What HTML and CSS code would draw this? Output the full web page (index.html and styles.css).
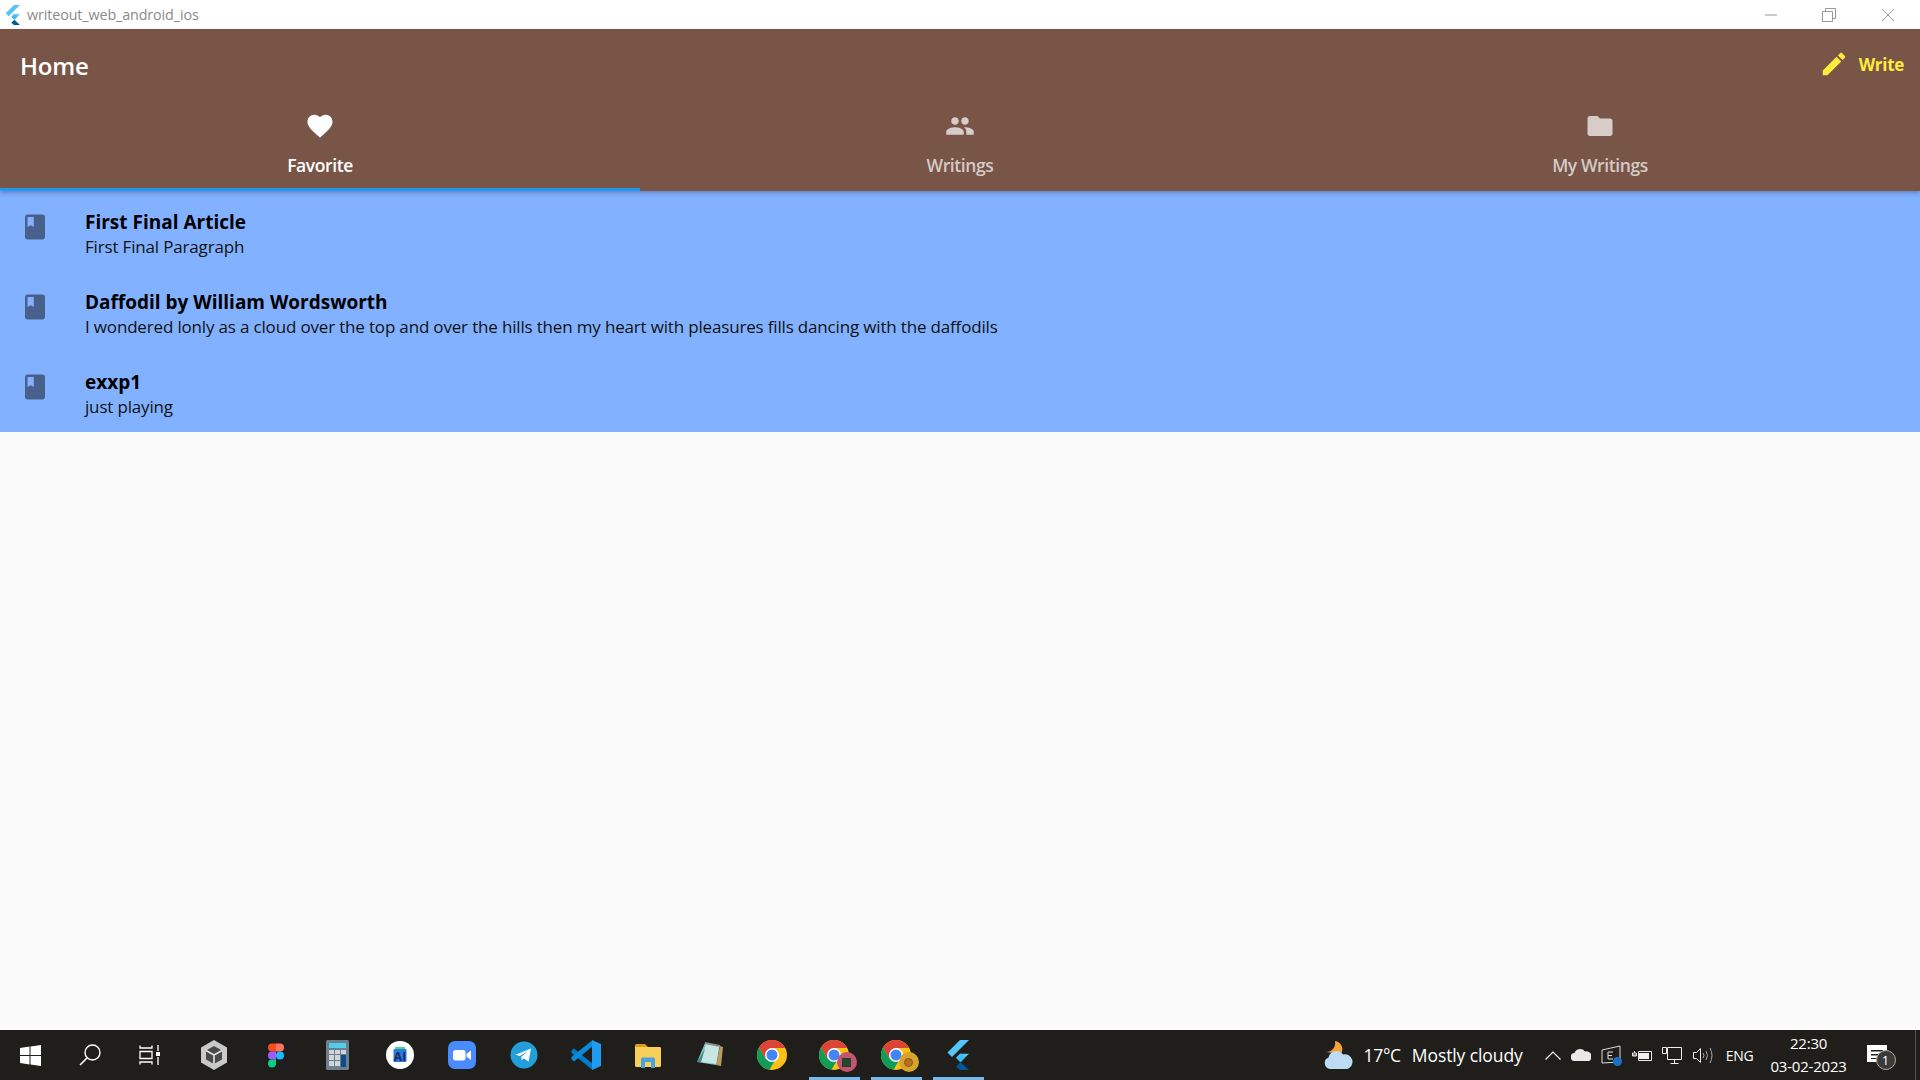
FILE: index.html
```html
<!DOCTYPE html>
<html lang="en">
<head>
    <meta charset="UTF-8">
    <title>writeout_web_android_ios</title>
    <link rel="stylesheet" href="styles.css">
</head>
<body>
    <svg class="defs" width="0" height="0">
        <symbol id="flutter" viewBox="0 0 24 30">
            <path fill="#54c5f8" d="M15 0 H24 L7 17 L2.500 12.500 Z"/>
            <path fill="#54c5f8" d="M15 13.800 H24 L15.500 22.300 L11 17.800 Z"/>
            <path fill="#01579b" d="M11 26.800 L15.500 22.300 L24 30 H15 Z"/>
            <path fill="#29b6f6" d="M11 17.800 L15.500 13.300 L20 17.800 L15.500 22.300 Z" opacity=".6"/>
        </symbol>
        <symbol id="chrome" viewBox="0 0 30 30">
            <circle cx="15" cy="15" r="15" fill="#fbc116"/>
            <path fill="#db4437" d="M15 0 A15 15 0 0 0 2 7.500 L8.500 18.800 L15 8 H28 A15 15 0 0 0 15 0 Z"/>
            <path fill="#0f9d58" d="M2 7.500 A15 15 0 0 0 12.500 29.800 L19 18.800 L8.500 18.800 Z"/>
            <circle cx="15" cy="15" r="7" fill="#fff"/>
            <circle cx="15" cy="15" r="5.500" fill="#4285f4"/>
        </symbol>
        <symbol id="book" viewBox="0 0 24 24">
            <path fill-rule="evenodd" d="M18 2H6c-1.100 0-2 .9-2 2v16c0 1.100.9 2 2 2h12c1.100 0 2-.9 2-2V4c0-1.100-.9-2-2-2zM6 4h5v8l-2.500-1.500L6 12V4z"/>
        </symbol>
    </svg>

    <div class="titlebar">
        <svg class="title-logo"><use href="#flutter"/></svg>
        <span class="title-text">writeout_web_android_ios</span>
        <div class="win-controls">
            <div class="win-btn">
                <svg width="14" height="14" viewBox="0 0 14 14"><path d="M1 7H13" stroke="#999" fill="none"/></svg>
            </div>
            <div class="win-btn">
                <svg width="14" height="14" viewBox="0 0 14 14"><path d="M.5 3.500H10.500V13.500H.5ZM3.500 3.500V.5H13.500V10.500H10.500" stroke="#999" fill="none"/></svg>
            </div>
            <div class="win-btn">
                <svg width="14" height="14" viewBox="0 0 14 14"><path d="M1 1L13 13M13 1L1 13" stroke="#999" fill="none"/></svg>
            </div>
        </div>
    </div>

    <header class="appbar">
        <div class="toolbar">
            <span class="home-title">Home</span>
            <div class="write-btn">
                <svg width="30" height="30" viewBox="0 0 24 24"><path fill="#ffeb3b" d="M3 17.250V21h3.750L17.810 9.940l-3.750-3.750L3 17.250zM20.710 7.040c.39-.39.39-1.020 0-1.410l-2.340-2.340c-.39-.39-1.020-.39-1.410 0l-1.830 1.830 3.750 3.750 1.830-1.830z"/></svg>
                <span class="write-text">Write</span>
            </div>
        </div>
        <nav class="tabs">
            <div class="tab active">
                <svg class="tab-icon" viewBox="0 0 24 24"><path d="M12 21.350l-1.450-1.320C5.400 15.360 2 12.280 2 8.500 2 5.420 4.420 3 7.500 3c1.740 0 3.410.81 4.500 2.090C13.090 3.810 14.760 3 16.500 3 19.580 3 22 5.420 22 8.500c0 3.780-3.400 6.860-8.550 11.540L12 21.350z"/></svg>
                <span class="tab-label">Favorite</span>
            </div>
            <div class="tab">
                <svg class="tab-icon" viewBox="0 0 24 24"><path d="M16 11c1.660 0 2.990-1.340 2.990-3S17.660 5 16 5c-1.660 0-3 1.340-3 3s1.340 3 3 3zm-8 0c1.660 0 2.990-1.340 2.990-3S9.660 5 8 5C6.340 5 5 6.340 5 8s1.340 3 3 3zm0 2c-2.330 0-7 1.170-7 3.500V19h14v-2.500c0-2.330-4.670-3.500-7-3.500zm8 0c-.29 0-.62.020-.97.050 1.160.84 1.970 1.970 1.970 3.450V19h6v-2.500c0-2.330-4.670-3.500-7-3.500z"/></svg>
                <span class="tab-label">Writings</span>
            </div>
            <div class="tab">
                <svg class="tab-icon" viewBox="0 0 24 24"><path d="M10 4H4c-1.100 0-1.990.9-1.990 2L2 18c0 1.100.9 2 2 2h16c1.100 0 2-.9 2-2V8c0-1.100-.9-2-2-2h-8l-2-2z"/></svg>
                <span class="tab-label">My Writings</span>
            </div>
        </nav>
    </header>

    <main class="content">
        <ul class="article-list">
            <li class="article">
                <svg class="article-icon"><use href="#book"/></svg>
                <div>
                    <div class="article-title">First Final Article</div>
                    <div class="article-text">First Final Paragraph</div>
                </div>
            </li>
            <li class="article">
                <svg class="article-icon"><use href="#book"/></svg>
                <div>
                    <div class="article-title">Daffodil by William Wordsworth</div>
                    <div class="article-text">I wondered lonly as a cloud over the top and over the hills then my heart with pleasures fills dancing with the daffodils</div>
                </div>
            </li>
            <li class="article">
                <svg class="article-icon"><use href="#book"/></svg>
                <div>
                    <div class="article-title">exxp1</div>
                    <div class="article-text">just playing</div>
                </div>
            </li>
        </ul>
    </main>

    <footer class="taskbar">
        <div class="sys-btn">
            <svg width="21" height="21" viewBox="0 0 21 21"><path fill="#fff" d="M0 3L9.500 1.600V10H0ZM10.500 1.400L21 0V10H10.500ZM0 11H9.500V19.400L0 18ZM10.500 11H21V21L10.500 19.600Z"/></svg>
        </div>
        <div class="sys-btn">
            <svg width="22" height="22" viewBox="0 0 22 22"><circle cx="13.500" cy="8.500" r="7.500" fill="none" stroke="#fff" stroke-width="1.400"/><path d="M8 14L1 21" stroke="#fff" stroke-width="1.600"/></svg>
        </div>
        <div class="sys-btn">
            <svg width="22" height="20" viewBox="0 0 22 20"><path fill="none" stroke="#fff" stroke-width="1.300" d="M1 .5V3H13V.5M1 6.500H13V13.500H1ZM1 19.500V17H13V19.500M19 0V6M19 12V20"/><rect x="17" y="7" width="4" height="4" fill="#fff"/></svg>
        </div>

        <div class="task-icons">
            <div class="task-item">
                <svg width="28" height="30" viewBox="0 0 28 30"><path fill="#c9c9c9" d="M14 0L27 7.500V22.500L14 30L1 22.500V7.500Z"/><path fill="#4a4a4a" d="M14 6L22 10.500V19.500L14 24L6 19.500V10.500Z"/><path fill="none" stroke="#e4e4e4" stroke-width="1.600" d="M14 15V24M14 15L6 10.500M14 15L22 10.500"/></svg>
            </div>
            <div class="task-item">
                <div class="figma-box">
                    <svg width="16" height="25" viewBox="0 0 16 24"><path fill="#f24e1e" d="M4 0H8V8H4A4 4 0 0 1 4 0Z"/><path fill="#ff7262" d="M8 0H12A4 4 0 0 1 12 8H8Z"/><path fill="#a259ff" d="M4 8H8V16H4A4 4 0 0 1 4 8Z"/><circle cx="12" cy="12" r="4" fill="#1abcfe"/><path fill="#0acf83" d="M4 16H8V20A4 4 0 1 1 4 16Z"/></svg>
                </div>
            </div>
            <div class="task-item">
                <svg width="24" height="30" viewBox="0 0 24 30"><rect width="23" height="30" rx="1.500" fill="#6d7f8c"/><rect x="3" y="3" width="17" height="5" fill="#4dd0e8"/><path fill="#cfd6da" d="M3 10H8V14H3ZM9 10H14V14H9ZM15 10H20V14H15ZM3 15H8V20H3ZM9 15H14V20H9ZM3 21H8V26H3ZM9 21H14V26H9Z"/><rect x="15" y="15" width="5" height="12" fill="#0f4a8a"/></svg>
            </div>
            <div class="task-item">
                <svg width="28" height="28" viewBox="0 0 28 28"><circle cx="14" cy="14" r="14" fill="#fff"/><path fill="#3ddc84" d="M9 6H19V10H9Z"/><rect x="7.500" y="8" width="13" height="13" rx="1" fill="#2f78e0"/><text x="14" y="20" text-anchor="middle" class="ai-text">AI</text></svg>
            </div>
            <div class="task-item">
                <svg width="28" height="28" viewBox="0 0 28 28"><rect width="28" height="28" rx="7" fill="#4a8cff"/><rect x="5" y="9" width="12.500" height="10.500" rx="2.500" fill="#fff"/><path fill="#fff" d="M18.500 13L23 9.500V19L18.500 15.500Z"/></svg>
            </div>
            <div class="task-item">
                <svg width="28" height="28" viewBox="0 0 28 28"><circle cx="14" cy="14" r="13.500" fill="#229ed9"/><path fill="#fff" d="M5.500 13.800L21 7.600 18.600 20.700 13.900 17.300 11.700 19.300 11.300 15.800 18 10 9.900 15.100Z"/></svg>
            </div>
            <div class="task-item">
                <svg width="30" height="30" viewBox="0 0 30 30"><path fill="#007acc" d="M.5 10.500L3 8.500L22 24L21 29.500L.5 13Z"/><path fill="#0b8ad8" d="M.5 19.500L3 21.500L22 6L21 .5L.5 17Z"/><path fill="#1f9cf0" d="M21 0L30 4V26L21 30Z"/></svg>
            </div>
            <div class="task-item">
                <svg width="28" height="25" viewBox="0 0 28 25"><path fill="#d9a012" d="M1 2.500A1.500 1.500 0 0 1 2.500 1H11L14 4H1Z"/><path fill="#f9cf5b" d="M1 4H26A1.500 1.500 0 0 1 27 5.500V22.500A1.500 1.500 0 0 1 25.500 24H2.500A1.500 1.500 0 0 1 1 22.500Z"/><path fill="#4aa3e0" d="M7 25V16A1.500 1.500 0 0 1 8.500 14.500H19.500A1.500 1.500 0 0 1 21 16V25H17V19H11V25Z"/></svg>
            </div>
            <div class="task-item">
                <svg width="28" height="28" viewBox="0 0 28 28"><path fill="#7cc4c0" d="M9 2L24 5L20 24L1 21Z"/><path fill="#c8e6e2" d="M10 3L23 5.500L20.500 23L5 21Z"/><path fill="#2f6f7a" d="M1 21L9 8L5 21Z" opacity=".7"/><path fill="#b89a62" d="M24 5L27 6L25 25L20 24Z"/><path fill="#8b8b8b" d="M9 1L24 4V6L9 3Z"/></svg>
            </div>
            <div class="task-item">
                <svg class="chrome-icon"><use href="#chrome"/></svg>
            </div>
            <div class="task-item running">
                <svg class="chrome-icon"><use href="#chrome"/></svg>
                <div class="profile-badge badge-pink"><span class="badge-core"></span></div>
            </div>
            <div class="task-item running">
                <svg class="chrome-icon"><use href="#chrome"/></svg>
                <div class="profile-badge badge-gold"><span class="badge-core gold"></span></div>
            </div>
            <div class="task-item running flutter-item">
                <svg class="flutter-icon"><use href="#flutter"/></svg>
            </div>
        </div>

        <div class="tray">
            <svg class="tray-weather" width="32" height="30" viewBox="0 0 32 30"><path fill="#f3a43a" d="M13 1A8.500 8.500 0 0 1 19 14L4 12A9 9 0 0 0 13 1Z"/><path fill="#bcdcf6" d="M8 29A6 6 0 0 1 6.500 17.500A8 8 0 0 1 21 14.500A7 7 0 0 1 25 29Z"/></svg>
            <span class="temp">17°C</span>
            <span class="weather">Mostly cloudy</span>
            <svg class="tray-chevron" width="16" height="9" viewBox="0 0 16 9"><path d="M.5 8.500L8 1L15.500 8.500" stroke="#fff" stroke-width="1.200" fill="none"/></svg>
            <svg class="tray-icon" width="20" height="12" viewBox="0 0 20 12"><path fill="#e8e8e8" d="M4 12A4 4 0 0 1 3.500 4A6 6 0 0 1 14 2.500A5 5 0 0 1 20 9.500Q20 12 17 12Z"/></svg>
            <div class="tray-sync">
                <svg width="20" height="20" viewBox="0 0 20 20"><path d="M1 5L19 1V17L1 18Z" stroke="#ddd" fill="none"/><path d="M12 7H7V14H12M7 10.500H11" stroke="#ddd" fill="none"/></svg>
                <span class="sync-dot"></span>
            </div>
            <svg class="tray-icon" width="20" height="14" viewBox="0 0 20 14"><path d="M6.500 3.500H19.500V12.500H6.500Z" stroke="#eee" fill="none"/><path d="M7 5H17V11H7Z" fill="#eee"/><path d="M0 7H4M2.500 3V5M.5 5H4.500V8H.5Z" stroke="#eee" fill="none"/></svg>
            <svg class="tray-icon" width="20" height="18" viewBox="0 0 20 18"><path d="M5.500 1.500H19.500V13.500H5.500ZM12.500 13.500V17M8.500 17.500H16.500M.5 1.500H4.500V7.500H.5Z" stroke="#eee" fill="none"/></svg>
            <svg class="tray-icon" width="20" height="17" viewBox="0 0 20 17"><path d="M.5 5.500H3.500L7.500 1.500V15.500L3.500 11.500H.5Z" stroke="#eee" fill="none"/><path d="M10 6Q12 8.500 10 11M13 4Q16 8.500 13 13M17 1Q21 8.500 17 16" stroke="#aaa" fill="none"/></svg>
            <span class="lang">ENG</span>
            <div class="clock">
                <span>22:30</span>
                <span>03-02-2023</span>
            </div>
            <div class="notify">
                <svg width="20" height="20" viewBox="0 0 20 20"><path fill-rule="evenodd" fill="#fff" d="M0 0H20V17H0ZM4 5V6.500H16V5ZM4 9V10.500H16V9ZM4 13V14H12V13Z"/></svg>
                <span class="notify-count">1</span>
            </div>
            <div class="show-desktop"></div>
        </div>
    </footer>
</body>
</html>
```

FILE: styles.css
```css
* {
    box-sizing: border-box;
}

body {
    margin: 0;
    height: 1080px;
    display: flex;
    flex-direction: column;
    overflow: hidden;
    background-color: #fafafa;
    font-family: "Open Sans", "Noto Sans", sans-serif;
}

.defs {
    display: block;
    height: 0;
}

/* window title bar */
.titlebar {
    height: 29px;
    display: flex;
    align-items: center;
    background-color: #fff;
}

.title-logo {
    width: 16px;
    height: 20px;
    margin-left: 4px;
}

.title-text {
    margin-left: 7px;
    font-size: 14.3px;
    letter-spacing: -0.1px;
    color: #8a8a8a;
}

.win-controls {
    margin-left: auto;
    margin-right: 3px;
    display: flex;
}

.win-btn {
    width: 58.5px;
    display: flex;
    justify-content: center;
}

/* app bar + tabs */
.appbar {
    height: 162px;
    background-color: #795548;
    box-shadow: 0 2px 4px rgba(0, 0, 0, 0.25);
    position: relative;
}

.toolbar {
    height: 70px;
    padding: 0 16px 0 20px;
    display: flex;
    align-items: center;
    justify-content: space-between;
    color: #fff;
}

.home-title {
    font-size: 24px;
    font-weight: 600;
    letter-spacing: -0.2px;
    margin-top: 3px;
}

.write-btn {
    display: flex;
    align-items: center;
    gap: 10px;
}

.write-text {
    font-size: 17px;
    font-weight: 700;
    letter-spacing: -0.3px;
    color: #ffeb3b;
}

.tabs {
    display: flex;
}

.tab {
    flex: 1;
    height: 92px;
    padding-top: 12px;
    display: flex;
    flex-direction: column;
    align-items: center;
    gap: 13px;
    border-bottom: 3px solid transparent;
    color: rgba(255, 255, 255, 0.7);
}

.tab.active {
    color: #fff;
    border-bottom-color: #2196f3;
}

.tab-icon {
    width: 30px;
    height: 30px;
    fill: currentColor;
}

.tab-label {
    font-size: 17.5px;
    font-weight: 600;
    letter-spacing: -0.4px;
    line-height: 23px;
}

/* list */
.content {
    flex: 1;
}

.article-list {
    margin: 0;
    padding: 1px 0 0;
    list-style: none;
    background-color: #82b1ff;
}

.article {
    height: 80px;
    padding: 18px 0 0 20px;
    display: flex;
    gap: 35px;
    color: #000;
}

.article-icon {
    width: 30px;
    height: 30px;
    margin-top: 2px;
    fill: rgba(0, 0, 0, 0.45);
}

.article-title {
    font-size: 19px;
    font-weight: 700;
    line-height: 24px;
}

.article-text {
    font-size: 17px;
    letter-spacing: -0.17px;
    line-height: 25px;
    color: #111;
}

/* windows taskbar */
.taskbar {
    height: 50px;
    display: flex;
    align-items: center;
    background-color: #201e1a;
    color: #fff;
}

.sys-btn {
    width: 60px;
    display: flex;
    justify-content: center;
}

.task-icons {
    height: 100%;
    padding-left: 8.5px;
    display: flex;
    gap: 11px;
}

.task-item {
    width: 51px;
    height: 100%;
    display: flex;
    align-items: center;
    justify-content: center;
    position: relative;
}

.task-item.running {
    border-bottom: 3px solid #76b9ed;
    padding-top: 3px;
}

.task-item.flutter-item {
    padding-right: 3px;
}

.figma-box {
    width: 30px;
    height: 30px;
    display: flex;
    align-items: center;
    justify-content: center;
    background-color: #1e1e1e;
}

.ai-text {
    font-size: 12px;
    font-weight: 700;
    fill: #10305f;
    font-family: "Open Sans", sans-serif;
}

.chrome-icon {
    width: 30px;
    height: 30px;
}

.flutter-icon {
    width: 24px;
    height: 30px;
}

.profile-badge {
    position: absolute;
    left: 28px;
    top: 22px;
    width: 20px;
    height: 20px;
    border-radius: 50%;
    display: flex;
    align-items: center;
    justify-content: center;
}

.badge-pink {
    background-color: #c2566f;
}

.badge-gold {
    background-color: #d8a32c;
}

.badge-core {
    width: 9px;
    height: 9px;
    background-color: #1f4a2c;
    border: 1px solid #333;
}

.badge-core.gold {
    background-color: #b5701e;
    border-color: #8a5514;
    border-radius: 50%;
}

/* system tray */
.tray {
    flex: 1;
    height: 100%;
    display: flex;
    align-items: center;
}

.tray-weather {
    margin-left: 338px;
}

.temp {
    margin-left: 10px;
    font-size: 17.5px;
    letter-spacing: -0.3px;
}

.weather {
    margin-left: 11px;
    font-size: 17.5px;
    letter-spacing: -0.1px;
}

.tray-chevron {
    margin-left: 22px;
}

.tray-icon {
    margin-left: 10.5px;
}

.tray-sync {
    position: relative;
    margin-left: 10px;
    height: 20px;
}

.sync-dot {
    position: absolute;
    right: -1px;
    bottom: -1px;
    width: 9px;
    height: 9px;
    border-radius: 50%;
    background-color: #1d6fc4;
}

.lang {
    margin-left: 13px;
    font-size: 14px;
    letter-spacing: -0.2px;
}

.clock {
    width: 80px;
    margin-left: 15px;
    display: flex;
    flex-direction: column;
    align-items: center;
    gap: 2px;
    font-size: 15px;
    letter-spacing: -0.2px;
    line-height: 21px;
}

.notify {
    position: relative;
    margin-left: 18px;
    height: 20px;
}

.notify-count {
    position: absolute;
    left: 9px;
    top: 5px;
    width: 20px;
    height: 20px;
    border: 1px solid #aaa;
    border-radius: 50%;
    background-color: #3a3a38;
    font-size: 13px;
    line-height: 18px;
    text-align: center;
}

.show-desktop {
    width: 1px;
    height: 100%;
    margin-left: auto;
    margin-right: 4px;
    background-color: #55534e;
}
```
